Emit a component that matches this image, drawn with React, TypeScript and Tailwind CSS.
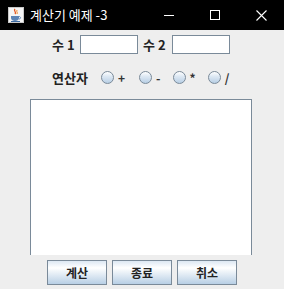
const labelFont = { fontFamily: '"Noto Sans CJK KR", "Noto Sans", sans-serif' };

function JavaIcon() {
  return (
    <svg width="16" height="16" viewBox="0 0 16 16">
      <rect x="0.5" y="0.5" width="15" height="15" fill="#f4f4f4" stroke="#c8c8c8" />
      <path d="M7 2 C5 4 9 5 7 7" stroke="#e2531b" strokeWidth="1.3" fill="none" />
      <path d="M9 3 C8 5 10 5 9 7" stroke="#f08a2a" strokeWidth="1" fill="none" />
      <path d="M3 9 h8 v2 c0 2 -2 3 -4 3 c-2 0 -4 -1 -4 -3 z" fill="#5a83b5" />
      <path d="M11 9.5 c2 0 2 2.5 0 2.5" stroke="#5a83b5" strokeWidth="1" fill="none" />
      <rect x="3" y="14" width="9" height="1" fill="#3c6aa0" />
    </svg>
  );
}

function Radio({ label, gap }: { label: string; gap: string }) {
  return (
    <div className={`flex items-center h-[21px] ${gap}`}>
      <span className="w-[13px] h-[13px] rounded-full border border-[#7a8a99] bg-[linear-gradient(to_bottom,#ffffff,#dde8f3_40%,#b8cfe5)]" />
      <span className="ml-[4px] text-[12px] font-bold text-[#333333]" style={labelFont}>
        {label}
      </span>
    </div>
  );
}

function Btn({ text }: { text: string }) {
  return (
    <button
      className="w-[60px] h-[25px] border border-[#7a8a99] bg-[linear-gradient(to_bottom,#dde8f3,#ffffff_30%,#b8cfe5)] text-[12px] font-bold text-[#222] flex items-center justify-center"
      style={labelFont}
    >
      {text}
    </button>
  );
}

export default function App() {
  return (
    <div className="w-[284px] h-[289px] bg-[#eeeeee] flex flex-col overflow-hidden">
      {/* title bar */}
      <div className="h-[30px] bg-black flex items-center shrink-0">
        <div className="ml-[8px]">
          <JavaIcon />
        </div>
        <span className="ml-[6px] text-white text-[13px]" style={labelFont}>
          계산기 예제 -3
        </span>
        <div className="ml-auto flex">
          <div className="w-[46px] h-[30px] flex items-center justify-center">
            <svg width="10" height="10" viewBox="0 0 10 10" shapeRendering="crispEdges">
              <rect x="0" y="5" width="10" height="1" fill="#fff" />
            </svg>
          </div>
          <div className="w-[46px] h-[30px] flex items-center justify-center">
            <svg width="10" height="10" viewBox="0 0 10 10" shapeRendering="crispEdges">
              <rect x="0.5" y="0.5" width="9" height="9" fill="none" stroke="#fff" strokeWidth="1" />
            </svg>
          </div>
          <div className="w-[46px] h-[30px] flex items-center justify-center">
            <svg width="11" height="11" viewBox="0 0 11 11">
              <path d="M0.5 0.5 L10.5 10.5 M10.5 0.5 L0.5 10.5" stroke="#fff" strokeWidth="1.1" />
            </svg>
          </div>
        </div>
      </div>

      {/* 수 1 / 수 2 */}
      <div className="mt-[5px] h-[19px] flex items-center pl-[52px] gap-[5px] shrink-0">
        <span className="w-[23px] text-[13px] font-bold text-[#222]" style={labelFont}>
          수 1
        </span>
        <input className="w-[58px] h-[19px] border border-[#7a8a99] bg-white outline-none" />
        <span className="w-[24px] text-[13px] font-bold text-[#222]" style={labelFont}>
          수 2
        </span>
        <input className="w-[58px] h-[19px] border border-[#7a8a99] bg-white outline-none" />
      </div>

      {/* 연산자 */}
      <div className="mt-[13px] h-[21px] flex items-center pl-[52px] shrink-0">
        <span className="w-[49px] text-[13px] font-bold text-[#222]" style={labelFont}>
          연산자
        </span>
        <Radio label="+" gap="" />
        <Radio label="-" gap="ml-[14px]" />
        <Radio label="*" gap="ml-[12px]" />
        <Radio label="/" gap="ml-[12px]" />
      </div>

      {/* text area */}
      <div className="mt-[11px] ml-[30px] w-[222px] h-[156px] bg-white border-t border-l border-r border-[#7a8a99] shrink-0" />

      {/* buttons */}
      <div className="mt-[5px] flex justify-center gap-[5px] shrink-0">
        <Btn text="계산" />
        <Btn text="종료" />
        <Btn text="취소" />
      </div>
    </div>
  );
}
